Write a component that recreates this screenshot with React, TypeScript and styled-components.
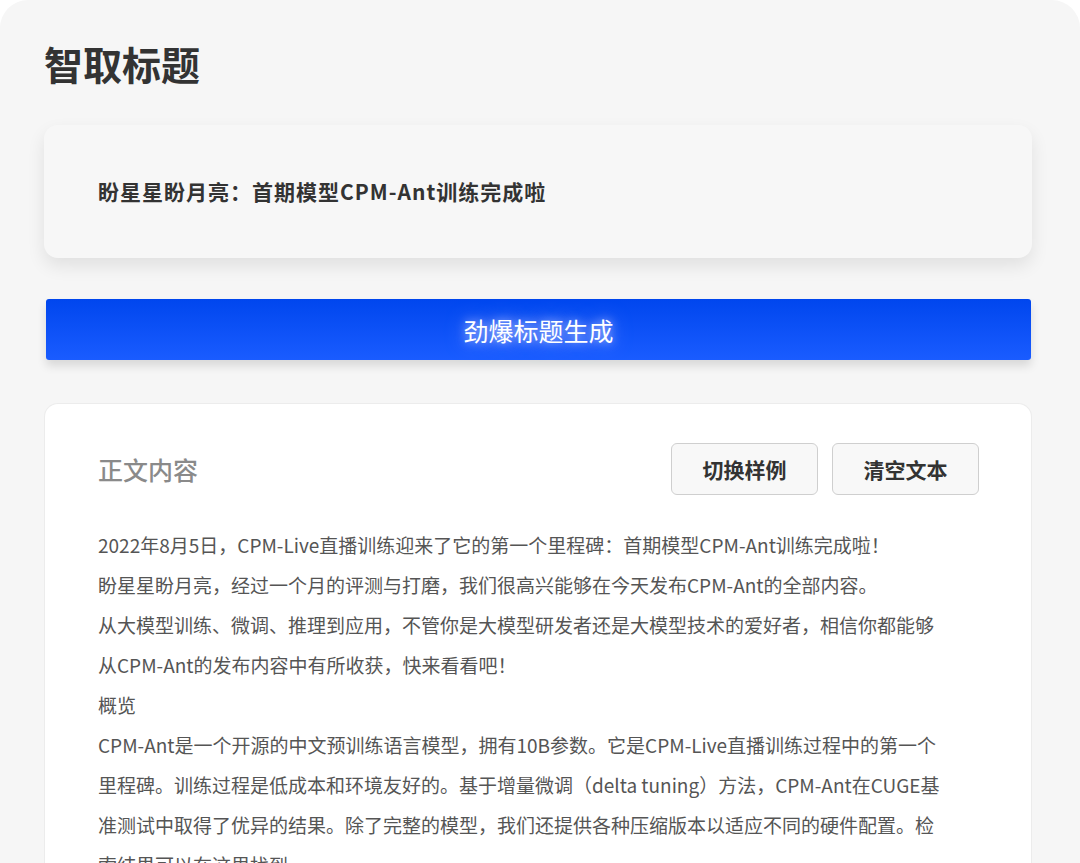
import React from 'react'
import styled, { createGlobalStyle } from 'styled-components'

const GlobalStyle = createGlobalStyle`
    body {
        margin: 0;
        background: #ffffff;
        font-family: "PingFang SC", "Noto Sans CJK SC", "Noto Sans", sans-serif;
    }
`

// one entry per visual line, so the wrapping matches the original
const lines = [
    '2022年8月5日，CPM-Live直播训练迎来了它的第一个里程碑：首期模型CPM-Ant训练完成啦！',
    '盼星星盼月亮，经过一个月的评测与打磨，我们很高兴能够在今天发布CPM-Ant的全部内容。',
    '从大模型训练、微调、推理到应用，不管你是大模型研发者还是大模型技术的爱好者，相信你都能够',
    '从CPM-Ant的发布内容中有所收获，快来看看吧！',
    '概览',
    'CPM-Ant是一个开源的中文预训练语言模型，拥有10B参数。它是CPM-Live直播训练过程中的第一个',
    '里程碑。训练过程是低成本和环境友好的。基于增量微调（delta tuning）方法，CPM-Ant在CUGE基',
    '准测试中取得了优异的结果。除了完整的模型，我们还提供各种压缩版本以适应不同的硬件配置。检',
    '索结果可以在这里找到。',
]

const App: React.FC = () => {
    return (
        <>
            <GlobalStyle />
            <StyledPanel>
                <StyledHeading>智取标题</StyledHeading>
                <StyledTitleCard>盼星星盼月亮：首期模型CPM-Ant训练完成啦</StyledTitleCard>
                <StyledGenerate>
                    <span>劲爆标题生成</span>
                </StyledGenerate>
                <StyledContentCard>
                    <StyledContentHeader>
                        <StyledContentLabel>正文内容</StyledContentLabel>
                        <StyledActions>
                            <StyledActionButton>切换样例</StyledActionButton>
                            <StyledActionButton>清空文本</StyledActionButton>
                        </StyledActions>
                    </StyledContentHeader>
                    <StyledBody>
                        {lines.map((p, i) => (
                            <StyledLine key={i}>{p}</StyledLine>
                        ))}
                    </StyledBody>
                </StyledContentCard>
            </StyledPanel>
        </>
    )
}

const StyledPanel = styled.div`
    box-sizing: border-box;
    width: 1080px;
    height: 863px;
    overflow: hidden;
    background: #f6f6f6;
    border-radius: 28px 28px 0 0;
    padding: 38px 48px 0 44px;
    display: flex;
    flex-direction: column;
`

const StyledHeading = styled.h1`
    flex-shrink: 0;
    margin: 0;
    font-size: 39px;
    line-height: 50px;
    font-weight: 700;
    color: #333;
`

const StyledTitleCard = styled.div`
    flex-shrink: 0;
    margin-top: 37px;
    height: 133px;
    box-sizing: border-box;
    display: flex;
    align-items: center;
    padding: 0 54px 2px;
    background: #f7f7f7;
    border-radius: 14px;
    box-shadow: 0 8px 18px rgba(0, 0, 0, 0.09);
    font-size: 21px;
    letter-spacing: 1px;
    font-weight: 700;
    color: #333;
`

const StyledGenerate = styled.button`
    flex-shrink: 0;
    margin: 41px 1px 0 2px;
    height: 61px;
    border: none;
    border-radius: 3px;
    background: linear-gradient(180deg, #0046ee 0%, #1a5cff 100%);
    box-shadow: 0 6px 10px rgba(0, 0, 0, 0.12);
    display: flex;
    align-items: center;
    justify-content: center;
    font-family: inherit;
    font-size: 25px;
    color: #fff;

    span {
        text-shadow: 0 0 10px rgba(190, 200, 255, 0.9), 0 0 20px rgba(140, 160, 255, 0.8);
    }
`

const StyledContentCard = styled.div`
    margin-top: 43px;
    flex: 1 0 auto;
    background: #fff;
    border: 1px solid #ececec;
    border-bottom: none;
    border-radius: 14px 14px 0 0;
    padding: 39px 52px 0 53px;
`

const StyledContentHeader = styled.div`
    display: flex;
    align-items: center;
    justify-content: space-between;
`

const StyledContentLabel = styled.div`
    font-size: 25px;
    font-weight: 500;
    color: #8a8a8a;
`

const StyledActions = styled.div`
    display: flex;
    gap: 14px;
`

const StyledActionButton = styled.button`
    width: 147px;
    height: 52px;
    border: 1px solid #cfcfcf;
    border-radius: 6px;
    background: #f8f8f8;
    font-family: inherit;
    font-size: 21px;
    font-weight: 700;
    color: #333;
`

const StyledBody = styled.div`
    margin-top: 30px;
`

const StyledLine = styled.div`
    white-space: nowrap;
    font-size: 19px;
    line-height: 40px;
    color: #555;
`

export default App
